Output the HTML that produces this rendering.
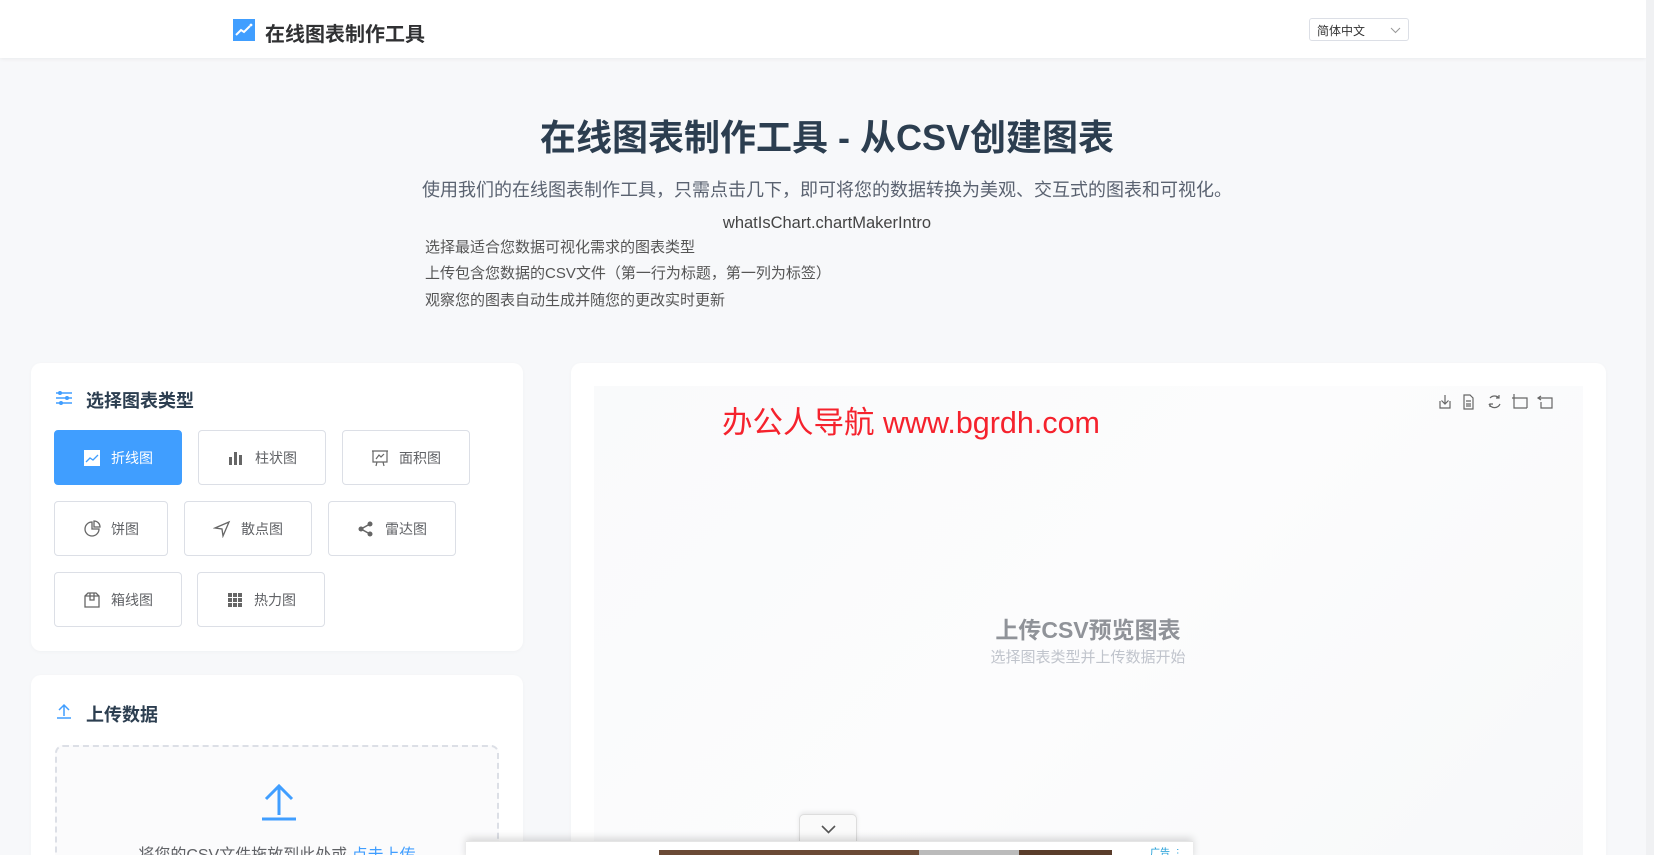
<!DOCTYPE html>
<html style="height:855px;overflow:hidden"><head><meta charset="utf-8"><style>
*{box-sizing:border-box;margin:0;padding:0}
body{width:1654px;height:855px;overflow:hidden;background:#f7f8fa;font-family:"Liberation Sans","Noto Sans CJK SC",sans-serif;position:relative;color:#2c3e50}
.hdr{position:absolute;left:0;top:0;width:1646px;height:58px;background:#fff;box-shadow:0 1px 4px rgba(0,0,0,.06)}
.scroll{position:absolute;right:0;top:0;width:8px;height:855px;background:#f0f1f3}
.abs{position:absolute}
.card{position:absolute;background:#fff;border-radius:10px;box-shadow:0 1px 4px rgba(0,0,0,.03)}
.btn{position:absolute;border:1px solid #dcdfe6;border-radius:4px;background:#fff;font-size:14px;color:#606266;display:flex;align-items:center;justify-content:center;gap:10px;height:55px}
.btn.on{background:#409eff;border-color:#409eff;color:#fff}
.btn svg{width:18px;height:18px}
.tt{font-size:18px;font-weight:bold;color:#2c3e50}
</style></head><body>
<div class="hdr">
<svg class="abs" style="left:233px;top:19px" width="22" height="22" viewBox="0 0 22 22"><rect width="22" height="22" fill="#409eff"/><path d="M3 16 L8 11 L11 13 L17 7" stroke="#fff" stroke-width="2" fill="none"/><circle cx="18" cy="6" r="1.4" fill="#fff"/></svg>
<div class="abs" style="left:265px;top:18px;font-size:20px;font-weight:bold;color:#303133">在线图表制作工具</div>
<div class="abs" style="left:1309px;top:18px;width:100px;height:23px;border:1px solid #dcdfe6;border-radius:3px;font-size:12px;color:#333;padding:3px 7px">简体中文<svg class="abs" style="right:7px;top:8px" width="11" height="7" viewBox="0 0 11 7"><path d="M1 1 L5.5 5.5 L10 1" stroke="#999" fill="none"/></svg></div>
</div>
<div class="scroll"></div>
<div class="abs" style="left:0;width:1654px;top:109px;text-align:center;font-size:36px;font-weight:bold;color:#2c3e50">在线图表制作工具 - 从CSV创建图表</div>
<div class="abs" style="left:0;width:1654px;top:176px;text-align:center;font-size:18px;color:#5a6270">使用我们的在线图表制作工具，只需点击几下，即可将您的数据转换为美观、交互式的图表和可视化。</div>
<div class="abs" style="left:0;width:1654px;top:214px;text-align:center;font-size:16.5px;color:#444">whatIsChart.chartMakerIntro</div>
<div class="abs" style="left:425px;top:235px;font-size:15px;color:#555;line-height:26.4px">选择最适合您数据可视化需求的图表类型<br>上传包含您数据的CSV文件（第一行为标题，第一列为标签）<br>观察您的图表自动生成并随您的更改实时更新</div>

<div class="card" style="left:31px;top:363px;width:492px;height:288px">
<svg class="abs" style="left:24px;top:27px" width="18" height="16" viewBox="0 0 18 16"><g stroke="#409eff" stroke-width="1.5"><path d="M1 3H17M1 8H17M1 13H17"/></g><g fill="#409eff"><circle cx="5" cy="3" r="2"/><circle cx="12" cy="8" r="2"/><circle cx="6" cy="13" r="2"/></g></svg>
<div class="abs tt" style="left:55px;top:24px">选择图表类型</div>
</div>
<div class="btn on" style="left:54px;top:430px;width:128px"><svg viewBox="0 0 18 18"><rect x="1" y="1" width="16" height="16" fill="#fff"/><path d="M3 13 L7 9 L10 11 L15 6" stroke="#409eff" stroke-width="1.3" fill="none"/></svg>折线图</div>
<div class="btn" style="left:198px;top:430px;width:128px"><svg viewBox="0 0 18 18" fill="#666"><rect x="2" y="8" width="3" height="8"/><rect x="7" y="3" width="3" height="13"/><rect x="12" y="6" width="3" height="10"/></svg>柱状图</div>
<div class="btn" style="left:342px;top:430px;width:128px"><svg viewBox="0 0 18 18" fill="none" stroke="#666" stroke-width="1.2"><path d="M1 2H17M2 2V13H16V2M5 10L8 6L10 8L13 5M6 13L5 17M12 13L13 17"/></svg>面积图</div>
<div class="btn" style="left:54px;top:501px;width:114px"><svg viewBox="0 0 18 18" fill="none" stroke="#666" stroke-width="1.3"><path d="M9 2A7 7 0 1 0 16 9H9Z"/><path d="M11 1V7H17A6 6 0 0 0 11 1Z"/></svg>饼图</div>
<div class="btn" style="left:184px;top:501px;width:128px"><svg viewBox="0 0 18 18" fill="none" stroke="#666" stroke-width="1.3"><path d="M16 2L2 8L9 9L10 16Z"/></svg>散点图</div>
<div class="btn" style="left:328px;top:501px;width:128px"><svg viewBox="0 0 18 18"><path d="M13 4L4 9L13 14" stroke="#666" stroke-width="1.5" fill="none"/><circle cx="13" cy="4" r="2.5" fill="#666"/><circle cx="4" cy="9" r="2.5" fill="#666"/><circle cx="13" cy="14" r="2.5" fill="#666"/></svg>雷达图</div>
<div class="btn" style="left:54px;top:572px;width:128px"><svg viewBox="0 0 18 18" fill="none" stroke="#666" stroke-width="1.3"><path d="M2 5L5 2H13L16 5V16H2Z M2 5H16 M7 2V9H11V2"/></svg>箱线图</div>
<div class="btn" style="left:197px;top:572px;width:128px"><svg viewBox="0 0 18 18" fill="#666"><rect x="2" y="2" width="4" height="4"/><rect x="7" y="2" width="4" height="4"/><rect x="12" y="2" width="4" height="4"/><rect x="2" y="7" width="4" height="4"/><rect x="7" y="7" width="4" height="4"/><rect x="12" y="7" width="4" height="4"/><rect x="2" y="12" width="4" height="4"/><rect x="7" y="12" width="4" height="4"/><rect x="12" y="12" width="4" height="4"/></svg>热力图</div>

<div class="card" style="left:31px;top:675px;width:492px;height:200px">
<svg class="abs" style="left:25px;top:28px" width="16" height="16" viewBox="0 0 16 16" fill="none" stroke="#409eff" stroke-width="1.5"><path d="M8 13V2M3 7L8 2L13 7M1 15H15"/></svg>
<div class="abs tt" style="left:55px;top:26px">上传数据</div>
<div class="abs" style="left:24px;top:70px;width:444px;height:150px;border:2px dashed #dcdfe6;border-radius:8px;background:#fbfbfc">
<svg class="abs" style="left:204px;top:36px" width="36" height="38" viewBox="0 0 36 38" fill="none" stroke="#409eff" stroke-width="3"><path d="M18 32V4M5 16L18 3L31 16"/><path d="M1 36H35"/></svg>
<div class="abs" style="left:0;width:440px;top:94px;text-align:center;font-size:16px;color:#606266">将您的CSV文件拖放到此处或 <span style="color:#409eff">点击上传</span></div>
</div>
</div>

<div class="card" style="left:571px;top:363px;width:1035px;height:520px">
<div class="abs" style="left:23px;top:23px;width:989px;height:500px;background:linear-gradient(135deg,#f9fafb,#fcfcfd 50%,#f7f8f9)"></div>
<svg class="abs" style="left:866px;top:29px" width="125" height="20" viewBox="0 0 125 20" fill="none" stroke="#666" stroke-width="1.2">
<path d="M8 3V12M4.5 8.5L8 12L11.5 8.5M3 9V16H13V9"/>
<path d="M27 3H33L36 6V17H27ZM29 9H34M29 12H34M29 14H34"/>
<path d="M53 6A6 6 0 0 1 62 6M52 12A6 6 0 0 0 63 12M62 3V6H59M53 15V12H56"/>
<path d="M77 2V16H90M75 6H90V16"/>
<path d="M104 4L101 6L104 8M101 6H115V16H104V10"/>
</svg>
</div>
<div class="abs" style="left:722px;top:398px;font-size:30.5px;color:#f5222d">办公人导航 www.bgrdh.com</div>
<div class="abs" style="left:888px;width:400px;top:611px;text-align:center;font-size:23px;font-weight:bold;color:#909399">上传CSV预览图表</div>
<div class="abs" style="left:888px;width:400px;top:646px;text-align:center;font-size:15px;color:#c0c4cc">选择图表类型并上传数据开始</div>

<div class="abs" style="left:799px;top:814px;width:58px;height:30px;background:#fafafa;border:1px solid #ddd;border-bottom:none;border-radius:5px 5px 0 0;box-shadow:0 -2px 4px rgba(0,0,0,.08)"><svg class="abs" style="left:21px;top:10px" width="15" height="9" viewBox="0 0 15 9"><path d="M1 1L7.5 7.5L14 1" stroke="#555" stroke-width="1.6" fill="none"/></svg></div>
<div class="abs" style="left:466px;top:841px;width:727px;height:20px;background:#fff;border-top:1px solid #e5e5e5;box-shadow:0 -3px 8px rgba(0,0,0,.15)">
<div class="abs" style="left:193px;top:8px;width:260px;height:6px;background:#6b4a36"></div>
<div class="abs" style="left:453px;top:8px;width:100px;height:6px;background:#bbb"></div>
<div class="abs" style="left:553px;top:8px;width:93px;height:6px;background:#5a3d2b"></div>
<div class="abs" style="left:684px;top:2px;font-size:10px;color:#1a9bd7">广告 ⋮</div>
</div>
</body></html>
